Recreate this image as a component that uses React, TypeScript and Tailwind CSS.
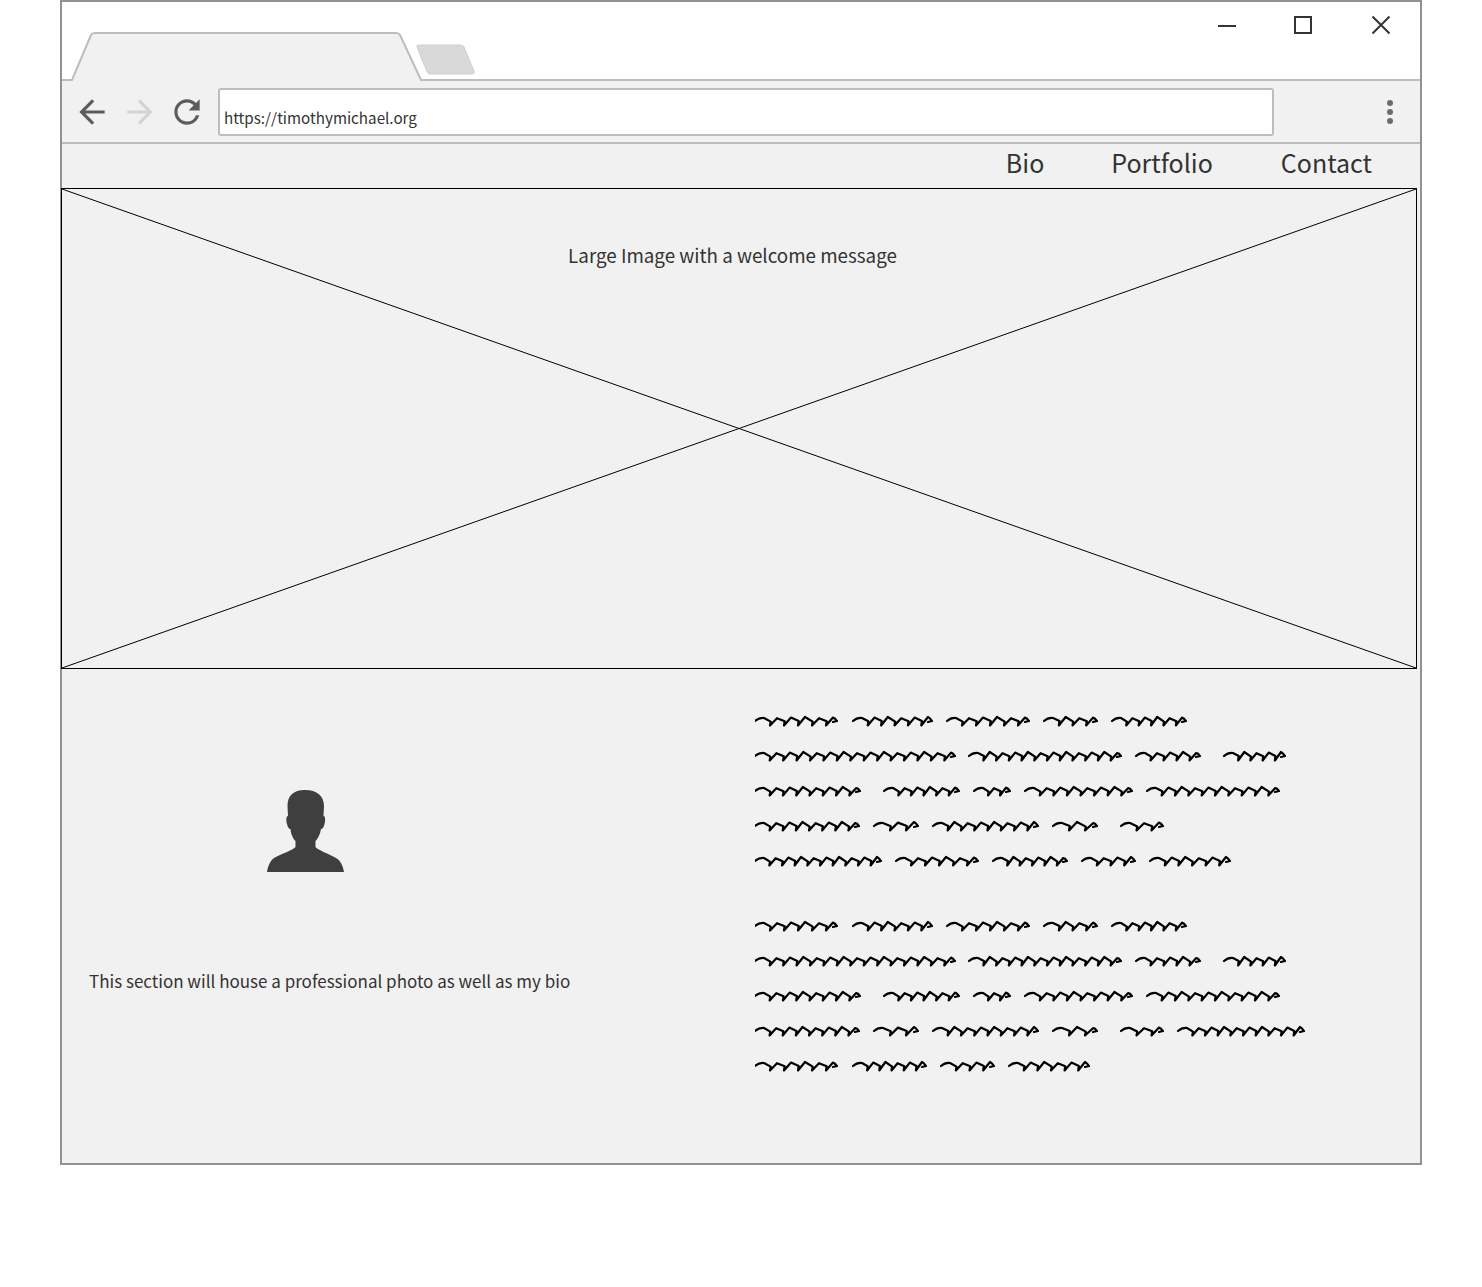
import { MdArrowBack, MdArrowForward, MdRefresh } from "react-icons/md";

type Word = [number, number];

const para1: Word[][] = [
  [[755, 837], [853, 932], [947, 1029], [1044, 1097], [1112, 1186]],
  [[755, 955], [969, 1121], [1136, 1200], [1224, 1285]],
  [[755, 860], [884, 959], [974, 1010], [1025, 1132], [1147, 1279]],
  [[755, 859], [874, 918], [933, 1038], [1053, 1097], [1121, 1163]],
  [[755, 881], [896, 978], [993, 1067], [1082, 1135], [1150, 1230]],
];

const para2: Word[][] = [
  para1[0],
  para1[1],
  para1[2],
  [[755, 859], [874, 918], [933, 1038], [1053, 1097], [1121, 1163], [1178, 1304]],
  [[755, 837], [853, 926], [941, 994], [1009, 1089]],
];

// a word of scribble: flat lead-in, slanted strokes, short tail
const wordPath = (start: number, end: number) => {
  const x0 = start - 755;
  const w = end - start;
  const body = w - 12;
  const n = Math.max(2, Math.round(body / 13));
  const step = body / n;
  let d = `M${x0} 10 Q${x0 + 4} 6.5 ${x0 + 9} 7`;
  for (let i = 0; i < n; i++) {
    const x = x0 + 8 + i * step;
    const wob = ((start + i * 5) % 3) * 0.6;
    d += ` L${x + step * 0.55} ${10 + wob * 0.5}`;
    d += ` L${x + step * 0.5} 14.5`;
    d += ` L${x + step} ${6 + wob}`;
  }
  d += ` Q${x0 + w - 2} 7 ${x0 + w} 10 L${x0 + w - 4} 11`;
  return d;
};

function ScribbleLine({ words }: { words: Word[] }) {
  return (
    <svg width="552" height="20" fill="none" stroke="#000" strokeWidth="2.2" strokeLinejoin="round" strokeLinecap="round" className="block">
      {words.map(([a, b]) => (
        <path key={a} d={wordPath(a, b)} />
      ))}
    </svg>
  );
}

function Scribble({ lines }: { lines: Word[][] }) {
  return (
    <div className="flex flex-col gap-[15px]">
      {lines.map((l, i) => (
        <ScribbleLine key={i} words={l} />
      ))}
    </div>
  );
}

export default function App() {
  return (
    <div className="w-[1482px] h-[1287px] bg-white pl-[60px] font-['Noto_Sans_CJK_JP',sans-serif] text-[#333]">
      <div className="w-[1362px] h-[1165px] border-2 border-[#929292] bg-[#f1f1f1] flex flex-col">
        {/* title bar */}
        <div className="relative h-[79px] shrink-0 bg-white">
          <svg width="1358" height="79" className="absolute left-0 top-0">
            <path d="M0 79 L10 79 L29 33 Q30 31 33 31 L334 31 Q337 31 338 33 L359 79 Z" fill="#f1f1f1" />
            <path d="M0 78 L10 78 L29 33 Q30 31 33 31 L334 31 Q337 31 338 33 L359 78 L1358 78" fill="none" stroke="#bdbdbd" strokeWidth="2" />
            <path d="M355 45 Q354 43 357 43 L399 43 Q401 43 402 45 L412 69 Q413 72 410 72 L368 72 Q366 72 365 70 Z" fill="#d9d9d9" stroke="#cfcfcf" strokeWidth="1" />
          </svg>
          <div className="absolute right-[24px] top-[8px] flex items-center gap-[48px]">
            <svg width="30" height="30" fill="none" stroke="#333" strokeWidth="2">
              <path d="M8 16 L26 16" />
            </svg>
            <svg width="30" height="30" fill="none" stroke="#333" strokeWidth="2">
              <rect x="7" y="7" width="16" height="16" />
            </svg>
            <svg width="30" height="30" fill="none" stroke="#333" strokeWidth="2">
              <path d="M6.5 6.5 L23.5 23.5 M23.5 6.5 L6.5 23.5" />
            </svg>
          </div>
        </div>

        {/* toolbar */}
        <div className="h-[63px] shrink-0 border-b-2 border-[#bdbdbd] flex items-center pl-[11px] pr-[27px]">
          <MdArrowBack size={38} color="#5c5c5c" />
          <MdArrowForward size={38} color="#d4d4d4" className="ml-[10px]" />
          <MdRefresh size={38} color="#5c5c5c" className="ml-[9px]" />
          <div className="ml-[12px] h-[48px] w-[1056px] rounded-[3px] border-2 border-[#bdbdbd] bg-white flex items-end pl-[4px] pb-[5px] text-[15.2px] leading-[24px]">
            https://timothymichael.org
          </div>
          <div className="ml-auto flex flex-col gap-[3px] pt-px">
            <span className="block w-[6px] h-[6px] rounded-full bg-[#6b6b6b]" />
            <span className="block w-[6px] h-[6px] rounded-full bg-[#6b6b6b]" />
            <span className="block w-[6px] h-[6px] rounded-full bg-[#6b6b6b]" />
          </div>
        </div>

        {/* nav */}
        <div className="h-[44px] shrink-0 flex justify-end gap-[68px] pr-[48px] text-[25px] leading-[36px]">
          <span className="-mr-px">Bio</span>
          <span>Portfolio</span>
          <span>Contact</span>
        </div>

        {/* hero placeholder */}
        <div className="relative -ml-px h-[481px] w-[1356px] shrink-0 border border-black flex justify-center pt-[50px] pr-[13px]">
          <svg className="absolute inset-0 w-full h-full" viewBox="0 0 1354 479" preserveAspectRatio="none">
            <path d="M0 0 L1354 479 M1354 0 L0 479" stroke="#000" strokeWidth="1" fill="none" />
          </svg>
          <span className="relative text-[18.8px] leading-[32px]">Large Image with a welcome message</span>
        </div>

        {/* bio section */}
        <div className="flex-1 flex">
          <div className="w-[693px] shrink-0 flex flex-col">
            <div className="mt-[121px] ml-[205px]">
              <svg width="78" height="82" viewBox="0 0 78 82" fill="#3f3f3f">
                <path d="M38 0 C26 0 20.5 6 20.5 16 L21 26 C19 26 19 31 20 34 C20.5 37 22 39 23.5 39 C24 45 26.5 49 28.5 51 L28.5 57 C26 60 14 64 7 68 C3 71 1 76 0 82 L77 82 C76 76 74 71 69 68 C62 64 51 60 48.5 57 L48.5 51 C50.5 49 53 45 54 39 C55.5 39 57 37 57.5 34 C58.5 31 58.5 26 56.5 26 L57 16 C57 6 50 0 38 0 Z" />
              </svg>
            </div>
            <p className="mt-[94px] ml-[27px] text-[17px] leading-[30px] whitespace-nowrap">
              This section will house a professional photo as well as my bio
            </p>
          </div>
          <div className="pt-[42px] flex flex-col gap-[45px]">
            <Scribble lines={para1} />
            <Scribble lines={para2} />
          </div>
        </div>
      </div>
    </div>
  );
}
